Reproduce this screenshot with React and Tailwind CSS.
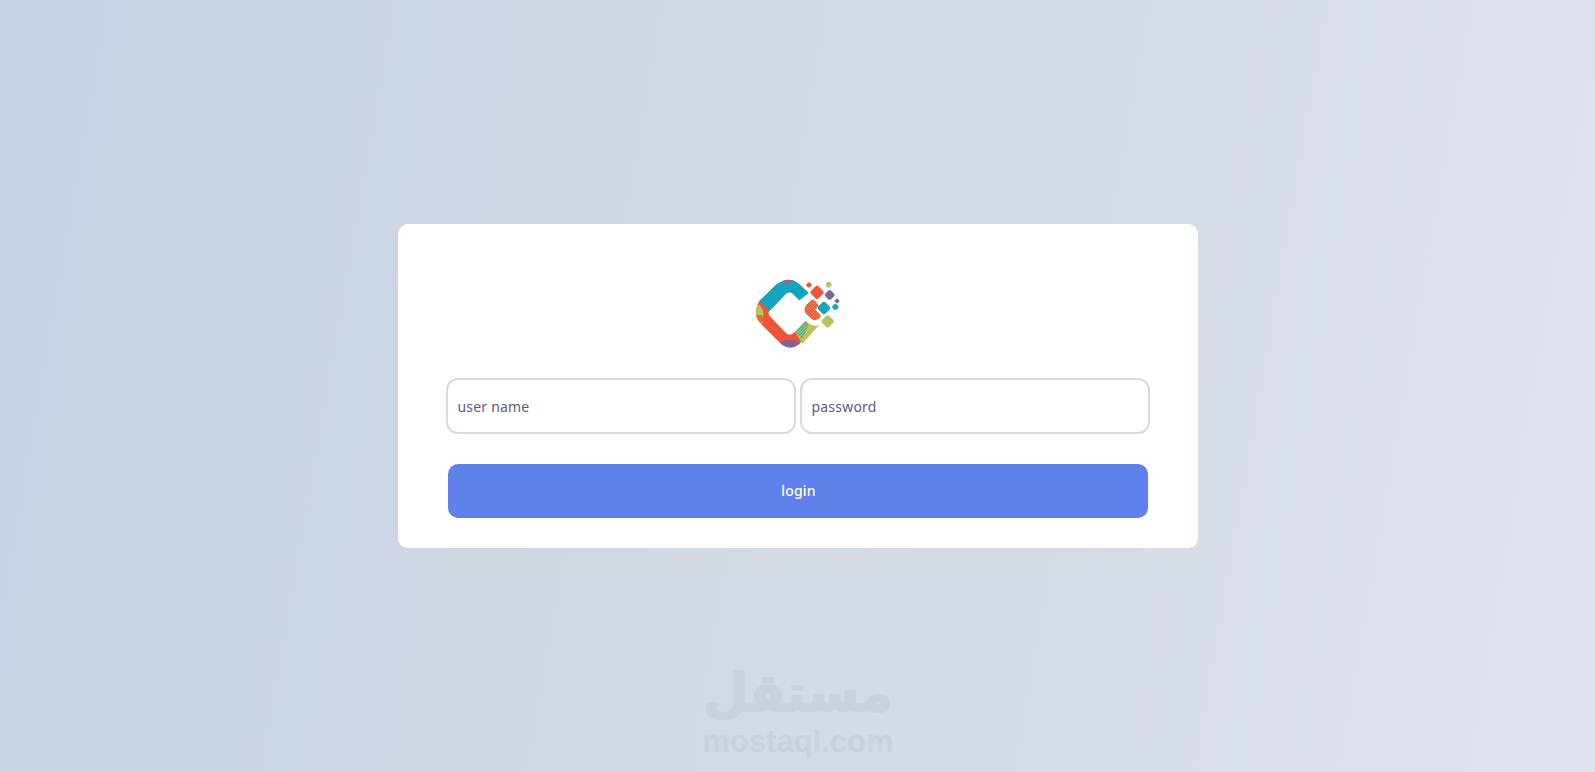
import React from 'react'

const band = 'M88 108 L140 58 Q160 44 175 44 Q195 44 208 58 L236 84 L208 106 L186 84 Q177 78 168 86 L118 138 Q112 146 120 154 L168 204 Q178 214 190 205 L198 198 L218 226 L208 237 Q180 260 150 234 L92 176 Q78 160 78 145 Q78 125 88 108 Z'

const Logo = () => (
  <svg width="130" height="90" viewBox="0 0 390 270">
    <defs>
      <pattern id="stipple" width="9" height="9" patternUnits="userSpaceOnUse">
        <rect width="9" height="9" fill="#f0533a" />
        <circle cx="2.5" cy="2.5" r="1.9" fill="#c4b552" />
        <circle cx="7" cy="7" r="1.9" fill="#c4b552" />
      </pattern>
      <pattern id="stippleTeal" width="9" height="9" patternUnits="userSpaceOnUse">
        <rect width="9" height="9" fill="#b9c45a" />
        <circle cx="2.5" cy="2.5" r="2.4" fill="#12a5c0" />
        <circle cx="7" cy="7" r="2.4" fill="#12a5c0" />
      </pattern>
      <clipPath id="bandClip">
        <path d={band} />
      </clipPath>
    </defs>
    {/* the C */}
    <path d={band} fill="#f0533a" />
    <g clipPath="url(#bandClip)">
      <path d="M60 80 L118 138 L215 115 L250 80 L200 20 L100 20 Z" fill="#12a5c0" />
      <path d="M152 40 L192 40 L172 64 Z" fill="#8a6a9c" />
      <path d="M70 115 L88 120 Q102 135 100 150 Q94 160 98 176 L70 170 Z" fill="#b9c45a" />
      <path d="M76 150 L97 150 L97 172 L80 172 Z" fill="url(#stipple)" />
      <ellipse cx="180" cy="238" rx="30" ry="13" fill="#7f6495" />
    </g>
    {/* green tail */}
    <path d="M195 200 L226 168 L240 178 Q252 184 267 181 L217 236 Z" fill="#b9c45a" />
    <path d="M195 200 L226 168 L236 176 L217 224 Z" fill="url(#stippleTeal)" />
    {/* pixels */}
    <rect x="230" y="53" width="14" height="14" rx="4" fill="#f0533a" transform="rotate(45 237 60)" />
    <rect x="288" y="51" width="16" height="16" rx="5" fill="#b9c45a" transform="rotate(45 296 59)" />
    <rect x="245" y="66" width="32" height="32" rx="8" fill="#f0533a" transform="rotate(45 261 82)" />
    <rect x="287" y="78" width="24" height="24" rx="6" fill="#7f6495" transform="rotate(45 299 90)" />
    <rect x="315" y="102" width="12" height="12" rx="3" fill="#7f6495" transform="rotate(45 321 108)" />
    <rect x="308" y="118" width="16" height="16" rx="4" fill="#12a5c0" transform="rotate(45 316 126)" />
    <rect x="267" y="114" width="30" height="30" rx="6" fill="#12a5c0" transform="rotate(45 282 129)" />
    <rect x="278" y="154" width="30" height="30" rx="8" fill="#b9c45a" transform="rotate(45 293 169)" />
    <path d="M244 105 Q252 103 258 110 L267 122 L256 134 L274 152 L264 163 Q254 168 246 163 L228 146 Q219 134 228 121 Z" fill="url(#stipple)" />
  </svg>
)

const Field = ({ placeholder }) => (
  <input
    placeholder={placeholder}
    className="w-[350px] h-14 px-[10px] bg-white border-2 border-[#d8dae0] rounded-xl text-sm tracking-[0.2px] outline-none placeholder:text-[#625a85]"
    style={{ fontFamily: '"Noto Sans", sans-serif' }}
  />
)

const App = () => {
  return (
    <div className="relative h-screen overflow-hidden flex items-center justify-center bg-[linear-gradient(100deg,#c5d3e4_0%,#d0d8e4_40%,#d6dce6_70%,#dfe3eb_100%)]">
      {/* Card */}
      <div className="w-[800px] px-12 pt-[41px] pb-[30px] bg-white rounded-[10px]">
        <div className="flex justify-center mb-[23px]">
          <div className="w-[130px] h-[90px] translate-x-[-3px]">
            <Logo />
          </div>
        </div>
        <div className="flex gap-1">
          <Field placeholder="user name" />
          <Field placeholder="password" />
        </div>
        <button
          className="block w-[700px] h-[54px] mx-[2px] mt-[30px] rounded-[10px] bg-[#5f81ea] text-white text-sm font-medium tracking-[0.2px] pl-[2px]"
          style={{ fontFamily: '"Noto Sans", sans-serif' }}
        >
          login
        </button>
      </div>

      {/* Watermark */}
      <div className="absolute left-[702px] top-[663px] w-[192px] flex flex-col items-center text-[#cbd1dc]">
        <span
          dir="rtl"
          className="text-[52px] leading-[61px] font-bold [-webkit-text-stroke:2px_#cbd1dc]"
          style={{ fontFamily: '"DejaVu Sans", sans-serif' }}
        >
          مستقل
        </span>
        <span
          className="text-[31px] leading-[36px] font-bold"
          style={{ fontFamily: '"Liberation Sans", sans-serif' }}
        >
          mostaql.com
        </span>
      </div>
    </div>
  )
}

export default App
